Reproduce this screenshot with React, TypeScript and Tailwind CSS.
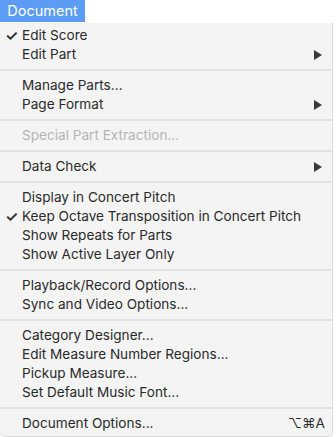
import { Fragment } from 'react'

type Item = {
  label: string
  checked?: boolean
  submenu?: boolean
  disabled?: boolean
  shortcut?: string
}

const groups: Item[][] = [
  [{ label: 'Edit Score', checked: true }, { label: 'Edit Part', submenu: true }],
  [{ label: 'Manage Parts...' }, { label: 'Page Format', submenu: true }],
  [{ label: 'Special Part Extraction...', disabled: true }],
  [{ label: 'Data Check', submenu: true }],
  [
    { label: 'Display in Concert Pitch' },
    { label: 'Keep Octave Transposition in Concert Pitch', checked: true },
    { label: 'Show Repeats for Parts' },
    { label: 'Show Active Layer Only' },
  ],
  [{ label: 'Playback/Record Options...' }, { label: 'Sync and Video Options...' }],
  [
    { label: 'Category Designer...' },
    { label: 'Edit Measure Number Regions...' },
    { label: 'Pickup Measure...' },
    { label: 'Set Default Music Font...' },
  ],
  [{ label: 'Document Options...', shortcut: '⌥⌘A' }],
]

function MenuRow({ item }: { item: Item }) {
  return (
    <div
      className={`flex items-center h-[19px] pl-[22px] pr-[10px] relative ${
        item.disabled ? 'text-[#b4b4b4]' : 'text-[#2a2a2a]'
      }`}
    >
      {item.checked && (
        <span className="absolute left-[5px] text-[15px] font-semibold leading-none">✓</span>
      )}
      <span className="flex-1 whitespace-nowrap">{item.label}</span>
      {item.submenu && (
        <svg width="8" height="10" viewBox="0 0 8 10">
          <path d="M0 0 L8 5 L0 10 Z" fill="#3b3b3b" />
        </svg>
      )}
      {item.shortcut && <span className="-mr-[3px]">{item.shortcut}</span>}
    </div>
  )
}

export default function App() {
  return (
    <div
      className="w-[336px] h-[437px] bg-white flex flex-col text-[13.6px]"
      style={{ fontFamily: 'Inter, "Liberation Sans", Arial, sans-serif' }}
    >
      <div className="h-[23px] flex">
        <div className="w-[85px] h-[22px] bg-[#5c9cf5] text-white text-[14.5px] flex items-center justify-center">
          Document
        </div>
      </div>
      <div className="flex-1 mr-[3px] bg-[#f4f4f4] rounded-b-[5px] border-r border-b border-[#dcdcdc] pt-[3px]">
        {groups.map((g, i) => (
          <Fragment key={i}>
            {i > 0 && (
              <div className="h-[12px] flex items-center">
                <div className="w-full h-[2px] bg-[#e2e2e2]" />
              </div>
            )}
            {g.map((item) => (
              <MenuRow key={item.label} item={item} />
            ))}
          </Fragment>
        ))}
      </div>
    </div>
  )
}
